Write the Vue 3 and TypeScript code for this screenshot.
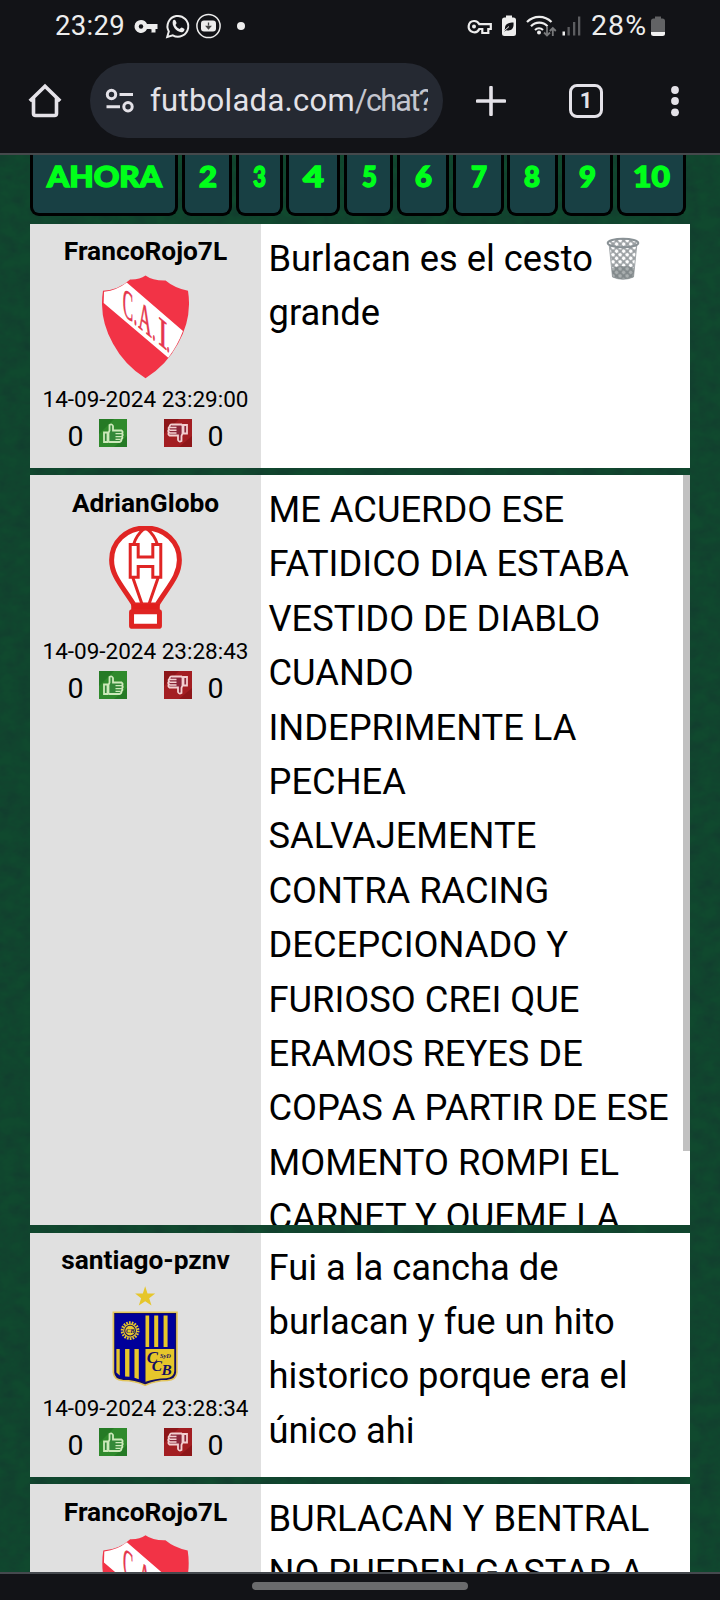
<script setup lang="ts">
interface Tab {
  label: string
  width: number
  x: number
  textWidth: number
}
interface Post {
  id: number
  user: string
  crest: 'cai' | 'globo' | 'central'
  date: string
  up: number
  down: number
  lines: string[]
  size: 'short' | 'long'
  bin?: boolean
}

const tabs: Tab[] = [
  { label: 'AHORA', width: 148, x: 16, textWidth: 116 },
  { label: '2', width: 50, x: 16, textWidth: 19 },
  { label: '3', width: 47, x: 16, textWidth: 14 },
  { label: '4', width: 54, x: 16, textWidth: 22 },
  { label: '5', width: 49, x: 17, textWidth: 16 },
  { label: '6', width: 52, x: 17, textWidth: 18 },
  { label: '7', width: 51, x: 17, textWidth: 17 },
  { label: '8', width: 51, x: 16, textWidth: 17 },
  { label: '9', width: 51, x: 16, textWidth: 18 },
  { label: '10', width: 69, x: 15, textWidth: 38 },
]

const posts: Post[] = [
  {
    id: 1, user: 'FrancoRojo7L', crest: 'cai', date: '14-09-2024 23:29:00', up: 0, down: 0,
    lines: ['Burlacan es el cesto', 'grande'], size: 'short', bin: true,
  },
  {
    id: 2, user: 'AdrianGlobo', crest: 'globo', date: '14-09-2024 23:28:43', up: 0, down: 0,
    lines: [
      'ME ACUERDO ESE', 'FATIDICO DIA ESTABA', 'VESTIDO DE DIABLO', 'CUANDO',
      'INDEPRIMENTE LA', 'PECHEA', 'SALVAJEMENTE', 'CONTRA RACING', 'DECEPCIONADO Y',
      'FURIOSO CREI QUE', 'ERAMOS REYES DE', 'COPAS A PARTIR DE ESE', 'MOMENTO ROMPI EL',
      'CARNET Y QUEME LA',
    ],
    size: 'long',
  },
  {
    id: 3, user: 'santiago-pznv', crest: 'central', date: '14-09-2024 23:28:34', up: 0, down: 0,
    lines: ['Fui a la cancha de', 'burlacan y fue un hito', 'historico porque era el', 'único ahi'], size: 'short',
  },
  {
    id: 4, user: 'FrancoRojo7L', crest: 'cai', date: '', up: 0, down: 0,
    lines: ['BURLACAN Y BENTRAL', 'NO PUEDEN GASTAR A'], size: 'short',
  },
]
</script>

<template>
  <div class="screen">
    <header class="chrome">
      <div class="status">
        <span class="clock">23:29</span>
        <svg width="30" height="52" viewBox="132 0 30 52">
          <path d="M141 20a6.5 6.5 0 1 0 6 9h3.500v3.500h5V29h2v-5h-10.500a6.500 6.500 0 0 0-6-4z" fill="#ededed" />
          <circle cx="141" cy="26.500" r="2.200" fill="#121317" />
          <path d="M150 29.200h1.500v3.500h-1.500z" fill="#121317" />
        </svg>
        <svg width="30" height="52" viewBox="162 0 30 52">
          <path d="M167.200 37l1.600-5.600a10.400 10.400 0 1 1 4 4z" fill="none" stroke="#ededed" stroke-width="2" />
          <path d="M173 20.500c1-1.200 2-1 2.500 0l1 2.300c.3.700-.8 1.600-1 2.100.8 1.900 2.300 3.200 4.200 4 .8-.3 1.400-1.700 2.200-1.400l2.300 1.200c.8.600 0 2.500-1.300 3.200-5.300 1.700-12-6-9.900-11.400z" fill="#ededed" />
        </svg>
        <svg width="34" height="52" viewBox="192 0 34 52">
          <circle cx="208.500" cy="26" r="11.600" fill="none" stroke="#ededed" stroke-width="1.500" />
          <rect x="201" y="20.500" width="15" height="11" rx="3" fill="#ededed" />
          <path d="M208.500 22.500v3M206.500 26.500h4l-2 2.300z" stroke="#444" stroke-width="1.300" fill="#444" />
        </svg>
        <span class="dot"></span>
        <span class="grow"></span>
        <svg width="32" height="52" viewBox="464 0 32 52">
          <path d="M474 21a5.600 5.600 0 1 0 5.300 8h3v4h6v-4h2.500v-4.800h-11.500a5.600 5.600 0 0 0-5.300-3.200z" fill="none" stroke="#ededed" stroke-width="2.200" />
          <circle cx="474" cy="26.600" r="2" fill="#ededed" />
        </svg>
        <svg width="26" height="52" viewBox="496 0 26 52">
          <path d="M506 15.500h6v2h1.500a2.500 2.500 0 0 1 2.500 2.500v13.500a2.500 2.500 0 0 1-2.500 2.500h-9a2.500 2.500 0 0 1-2.500-2.500V20a2.500 2.500 0 0 1 2.500-2.500h1.500z" fill="#ededed" />
          <path d="M513.500 22.500c-5 0-9 2-8.500 6l-1 3 2.500-1.200c5.500 1 7.500-2.500 7-7.800z" fill="#121317" />
          <path d="M504 31l5-4.500" stroke="#ededed" stroke-width="1" />
        </svg>
        <svg width="38" height="52" viewBox="522 0 38 52">
          <g fill="none" stroke="#ededed" stroke-width="2.200">
            <path d="M527 22a17 17 0 0 1 24.500 0" />
            <path d="M531 26.200a11.500 11.500 0 0 1 16.500 0" />
            <path d="M535 30a6 6 0 0 1 8 0" />
          </g>
          <circle cx="539" cy="32.500" r="2" fill="#ededed" />
          <path d="M547 26.500v9M544 32.500l3 3 3-3M552.800 36v-8M549.800 31l3-3 3 3" stroke="#77787a" stroke-width="1.800" fill="none" />
        </svg>
        <svg width="26" height="52" viewBox="560 0 26 52">
          <path d="M562.500 31.500h2.500v4h-2.500z" fill="#ededed" />
          <path d="M567.500 27h2.300v8.500h-2.300zM573 22h2.300v13.500H573zM578 16.500h2.300v19H578z" fill="#5c5d60" />
        </svg>
        <span class="percent">28%</span>
        <svg width="20" height="52" viewBox="648 0 20 52">
          <path d="M655 16.500h6v2h1.500a2.500 2.500 0 0 1 2.500 2.500v11h-14V21a2.500 2.500 0 0 1 2.500-2.500H655z" fill="#626365" />
          <path d="M651 32h14v1.500a2.500 2.500 0 0 1-2.500 2.500h-9a2.500 2.500 0 0 1-2.500-2.500z" fill="#f2f2f2" />
        </svg>
      </div>

      <div class="toolbar">
        <svg class="home" width="36" height="38" viewBox="0 0 36 38">
          <path d="M2.800 19L18 4.200 33.200 19M6.500 16v15.500a2 2 0 0 0 2 2h19a2 2 0 0 0 2-2V16" fill="none" stroke="#e4e2e8" stroke-width="3.600" />
        </svg>
        <div class="url">
          <svg width="30" height="26" viewBox="0 0 30 26" fill="none" stroke="#e4e2e8" stroke-width="3">
            <circle cx="6.500" cy="6.500" r="4.200" />
            <circle cx="23" cy="18.700" r="4.200" />
            <path d="M14.500 6.500H28M1.500 18.700h13.500" />
          </svg>
          <span class="address">futbolada.com<i>/chat?</i></span>
        </div>
        <svg class="plus" width="30" height="30" viewBox="0 0 30 30">
          <path d="M15 1.500v27M1.500 15h27" stroke="#e4e2e8" stroke-width="3.600" stroke-linecap="round" />
        </svg>
        <span class="count">1</span>
        <svg class="more" width="8" height="32" viewBox="0 0 8 32" fill="#e4e2e8">
          <circle cx="4" cy="5" r="3.900" /><circle cx="4" cy="16" r="3.900" /><circle cx="4" cy="27.300" r="3.900" />
        </svg>
      </div>
    </header>

    <main class="page">
      <svg class="felt" width="720" height="1417">
        <filter id="grain" x="0" y="0" width="100%" height="100%" color-interpolation-filters="sRGB">
          <feTurbulence type="fractalNoise" baseFrequency="0.06 0.08" numOctaves="4" seed="4" />
          <feColorMatrix values="0 0 0 0 0.07  0 0 0 0 0.22  0 0 0 0 0.18  1.100 0 0 0 -0.3" />
        </filter>
        <rect width="720" height="1417" filter="url(#grain)" />
      </svg>

      <nav class="tabs">
        <a v-for="t in tabs" :key="t.label" class="tab" :style="{ width: t.width + 'px' }">
          <svg :width="t.width - 6" height="58" :viewBox="`3 0 ${t.width - 6} 58`">
            <text :x="t.x + 1" y="31.500" :textLength="t.textWidth - 1" lengthAdjust="spacingAndGlyphs">{{ t.label }}</text>
          </svg>
        </a>
      </nav>

      <article v-for="p in posts" :key="p.id" class="post" :class="p.size">
        <aside class="author">
          <strong class="name">{{ p.user }}</strong>

          <svg v-if="p.crest === 'cai'" class="crest" viewBox="0 0 260 310">
            <path d="M130 1Q112 14 84 13Q50 44 3 47Q-10 130 33 205Q68 270 130 308Q192 270 227 205Q270 130 257 47Q216 38 190 16Q152 17 130 1z" fill="#f23346" />
            <path d="M74 22Q45 45 6 50L5 83 198 247Q226 210 242 167z" fill="#fff" />
            <g class="initials" transform="matrix(1 .82 0 1 62 117)">
              <text x="0" y="0" textLength="31" lengthAdjust="spacingAndGlyphs">C</text>
              <text x="33" y="0" textLength="10" lengthAdjust="spacingAndGlyphs">.</text>
              <text x="46" y="0" textLength="40" lengthAdjust="spacingAndGlyphs">A</text>
              <text x="88" y="0" textLength="10" lengthAdjust="spacingAndGlyphs">.</text>
              <text x="106" y="0" textLength="27" lengthAdjust="spacingAndGlyphs">I</text>
              <text x="131" y="0" textLength="10" lengthAdjust="spacingAndGlyphs">.</text>
            </g>
          </svg>

          <svg v-else-if="p.crest === 'globo'" class="crest" viewBox="0 0 260 310">
            <path d="M130 6C70 6 28 50 28 102C28 150 60 180 96 238H164C200 180 232 150 232 102C232 50 190 6 130 6z" fill="#fff" stroke="#e02524" stroke-width="15" />
            <path d="M126 8Q102 28 94 56M134 8Q158 28 166 56M92 156L122 242M168 156L138 242" fill="none" stroke="#e02524" stroke-width="9" />
            <path d="M84 56h24v37h44V56h24v98h-24v-32h-44v32H84z" fill="#fff" stroke="#e02524" stroke-width="9" />
            <path d="M87 235h86v18H87z" fill="#e01e1c" />
            <rect x="88" y="258" width="84" height="44" fill="#fff" stroke="#df2422" stroke-width="15" rx="2" />
          </svg>

          <svg v-else class="crest" viewBox="0 0 260 310">
            <path d="M129 6L136 28H159L141 42 148 64 129 51 110 64 117 42 99 28H122z" fill="#e6c62b" />
            <path d="M34 84H224V264Q222 286 195 288 160 288 129 302 98 288 62 288 36 286 34 264z" fill="#110d62" stroke="#e2c55b" stroke-width="5" />
            <path d="M39 89H128V192H39z" fill="#00009a" />
            <path d="M128 89H218V192H128zM39 192H128V293Q98 282 62 281 43 280 40 262z" fill="#00009a" />
            <path d="M130 94h11v94h-11zM156 94h12v94h-12zM184 94h12v94h-12zM43 194h10v79l-10-9zM69 194h13v83l-13-1zM97 194h13v90l-13-4z" fill="#e6c62b" />
            <path d="M130 194H216V260Q215 278 192 281 160 281 130 292z" fill="#e6c62b" />
            <circle cx="84" cy="139" r="24" fill="none" stroke="#e6c62b" stroke-width="8" stroke-dasharray="5 3.380" />
            <circle cx="84" cy="139" r="21" fill="#e6c62b" />
            <circle cx="84" cy="139" r="16" fill="none" stroke="#110d62" stroke-width="3" />
            <text x="72" y="146" class="script" font-size="19">CB</text>
            <g class="script">
              <text x="134" y="236" font-size="50">C</text>
              <text x="149" y="259" font-size="46">C</text>
              <text x="178" y="271" font-size="46">B</text>
              <text x="173" y="222" font-size="19">SyD</text>
            </g>
          </svg>

          <time class="date">{{ p.date }}</time>
          <div class="votes">
            <span>{{ p.up }}</span>
            <svg class="thumb up" viewBox="0 0 28 28">
              <rect width="28" height="28" fill="#2f8a2c" />
              <path d="M0 0h15L0 15zM28 17v11H15z" fill="#1f6f22" opacity=".6" />
              <path d="M5 13.500h3.500v9.500H5zM9.500 22.500V14l1-2.500V6q2.500-1.500 3.500 1v4.500h8.500q2 1.500.5 3 1.500 1.500 0 3 1 1.500-.5 2.700 0 2.500-2 2.800H10.500z" fill="#348839" stroke="#cde9ba" stroke-width="1.800" />
              <path d="M16.500 14.700h6M16.500 17.600h6M16.500 20.300h5" stroke="#cde9ba" stroke-width="1.300" />
            </svg>
            <svg class="thumb down" viewBox="0 0 28 28">
              <rect width="28" height="28" fill="#a31e22" />
              <path d="M0 0h15L0 15zM28 17v11H15z" fill="#7e1014" opacity=".6" />
              <path d="M23 14.500h-3.500V6H23zM18.500 6.500v8l-1 2.500v5q-2.500 1.500-3.500-1v-4.500H5.500q-2-1.500-.5-3-1.500-1.500 0-3-1-1.500.5-2.700Q6 5 8 5.500h9.500z" fill="#8b2639" stroke="#f3cfd0" stroke-width="1.800" />
              <path d="M5.500 8.500h7M5.500 11.200h7M5.500 14h7" stroke="#f3cfd0" stroke-width="1.400" />
            </svg>
            <span>{{ p.down }}</span>
          </div>
        </aside>

        <div class="message">
          <div v-for="(line, i) in p.lines" :key="i" class="line">
            <span>{{ line }}</span>
            <svg v-if="p.bin && i === 0" class="bin" width="34" height="44" viewBox="0 0 34 44">
              <defs>
                <pattern id="mesh" width="5" height="5" patternUnits="userSpaceOnUse" patternTransform="rotate(45)">
                  <rect width="5" height="5" fill="#9a9fa2" />
                  <circle cx="2.500" cy="2.500" r="1.850" fill="#fff" />
                </pattern>
              </defs>
              <path d="M3 6L6.500 40Q17 44.500 27.500 40L31 6z" fill="url(#mesh)" stroke="#a4a9ac" />
              <path d="M5.700 31Q17 27 28.300 31L27.500 40Q17 44.500 6.500 40z" fill="#727a7c" opacity=".6" />
              <ellipse cx="17" cy="6" rx="15.300" ry="4.200" fill="url(#mesh)" stroke="#899195" stroke-width="2" />
            </svg>
          </div>
          <span v-if="p.size === 'long'" class="scroll"></span>
        </div>
      </article>
    </main>

    <footer class="gesture"><span></span></footer>
  </div>
</template>

<style>
body {
  margin: 0;
  background: #121317;
}
</style>

<style scoped>
.screen {
  width: 720px;
  height: 1600px;
  display: flex;
  flex-direction: column;
  overflow: hidden;
  font-family: Roboto, "Liberation Sans", sans-serif;
  color: #000;
}
svg {
  display: block;
  flex: none;
}
.chrome {
  height: 155px;
  flex: none;
  box-sizing: border-box;
  background: #121317;
  border-bottom: 2px solid #45494c;
}
.status {
  height: 52px;
  display: flex;
  align-items: center;
  padding: 0 52px 0 55px;
  color: #ededed;
  font-size: 27.5px;
  line-height: 52px;
}
.clock {
  width: 77px;
  letter-spacing: .3px;
}
.dot {
  width: 8px;
  height: 8px;
  margin-left: 11px;
  border-radius: 50%;
  background: #ededed;
}
.grow {
  flex: 1;
}
.percent {
  width: 57px;
  margin-left: 5px;
  white-space: nowrap;
  font-size: 28.5px;
  letter-spacing: 1.1px;
}
.toolbar {
  height: 97px;
  display: flex;
  align-items: center;
}
.home {
  margin-left: 27px;
}
.url {
  width: 353px;
  height: 75px;
  margin-left: 27px;
  border-radius: 38px;
  background: #252932;
  box-sizing: border-box;
  padding-left: 15px;
  display: flex;
  align-items: center;
}
.address {
  width: 278px;
  margin-left: 15px;
  overflow: hidden;
  white-space: nowrap;
  color: #e3e2e8;
  font-size: 31px;
  line-height: 44px;
  letter-spacing: .3px;
}
.address i {
  font-style: normal;
  color: #c3c5ce;
  font-size: 30.5px;
  letter-spacing: -1.7px;
}
.plus {
  margin-left: 33px;
}
.count {
  width: 34px;
  height: 34px;
  margin-left: 63px;
  box-sizing: border-box;
  border: 3.5px solid #e4e2e8;
  border-radius: 8px;
  color: #e4e2e8;
  font-size: 22px;
  font-weight: 700;
  line-height: 28px;
  text-align: center;
}
.more {
  margin-left: 68px;
}
.page {
  position: relative;
  flex: 1;
  min-height: 0;
  overflow: hidden;
  padding: 0 30px;
  background: #10492e;
}
.felt {
  position: absolute;
  left: 0;
  top: 0;
}
.tabs {
  position: relative;
  display: flex;
  justify-content: space-between;
  width: 656px;
  height: 61px;
}
.tab {
  box-sizing: border-box;
  border: 3px solid #000;
  border-top: 0;
  border-radius: 0 0 9px 9px;
  background: #184044;
}
.tab text {
  font-family: Lato, "DejaVu Sans", sans-serif;
  font-weight: 900;
  font-size: 29px;
  fill: #00ff1a;
  stroke: #00ff1a;
  stroke-width: 1.4px;
}
.post {
  position: relative;
  display: flex;
  height: 244px;
  margin-top: 7px;
  background: #fff;
  overflow: hidden;
}
.tabs + .post {
  margin-top: 8px;
}
.post.long {
  height: 750px;
  margin-bottom: 8px;
}
.post.long + .post {
  margin-top: 0;
}
.author {
  width: 231px;
  flex: none;
  box-sizing: border-box;
  padding-top: 12px;
  background: #e0e0e0;
  display: flex;
  flex-direction: column;
  align-items: center;
}
.name {
  font-size: 26.3px;
  line-height: 30px;
}
.crest {
  width: 87px;
  height: 104px;
  margin-top: 9px;
}
.post:nth-of-type(even) .author {
  padding-top: 13px;
}
.post:nth-of-type(even) .crest {
  margin: 8px 0 2px;
  height: 103px;
}
.post:nth-of-type(even) .votes {
  line-height: 36px;
}
.initials text {
  font-family: "Liberation Serif", serif;
  font-weight: 400;
  font-size: 122px;
  fill: #e5354b;
  stroke: #e5354b;
  stroke-width: 2px;
}
.script, .script text {
  font-family: "Liberation Serif", serif;
  font-style: italic;
  font-weight: 700;
  fill: #110d62;
}
.date {
  height: 30px;
  margin-top: 5px;
  font-size: 22.5px;
  line-height: 30px;
  white-space: nowrap;
}
.votes {
  margin-top: 5px;
  display: flex;
  font-size: 28.5px;
  line-height: 36px;
}
.thumb {
  width: 28px;
  height: 28px;
}
.up {
  margin: 0 37px 0 15.2px;
}
.down {
  margin-right: 15.8px;
}
.message {
  flex: 1;
  padding: 7.5px 0 0 7.5px;
}
.post:nth-of-type(even) .message {
  padding-top: 8px;
}
.line {
  height: 54.4px;
  display: flex;
  font-size: 36.3px;
  line-height: 54.4px;
  white-space: nowrap;
}
.bin {
  margin: 5px 0 0 13px;
}
.scroll {
  position: absolute;
  right: 0;
  top: 0;
  width: 7px;
  height: 676px;
  background: #c1c1c1;
}
.gesture {
  height: 28px;
  flex: none;
  box-sizing: border-box;
  border-top: 2px solid #45494e;
  padding-top: 8px;
  background: #121317;
  display: flex;
  justify-content: center;
}
.gesture span {
  width: 216px;
  height: 8px;
  border-radius: 4px;
  background: #6a6b6d;
}
</style>
